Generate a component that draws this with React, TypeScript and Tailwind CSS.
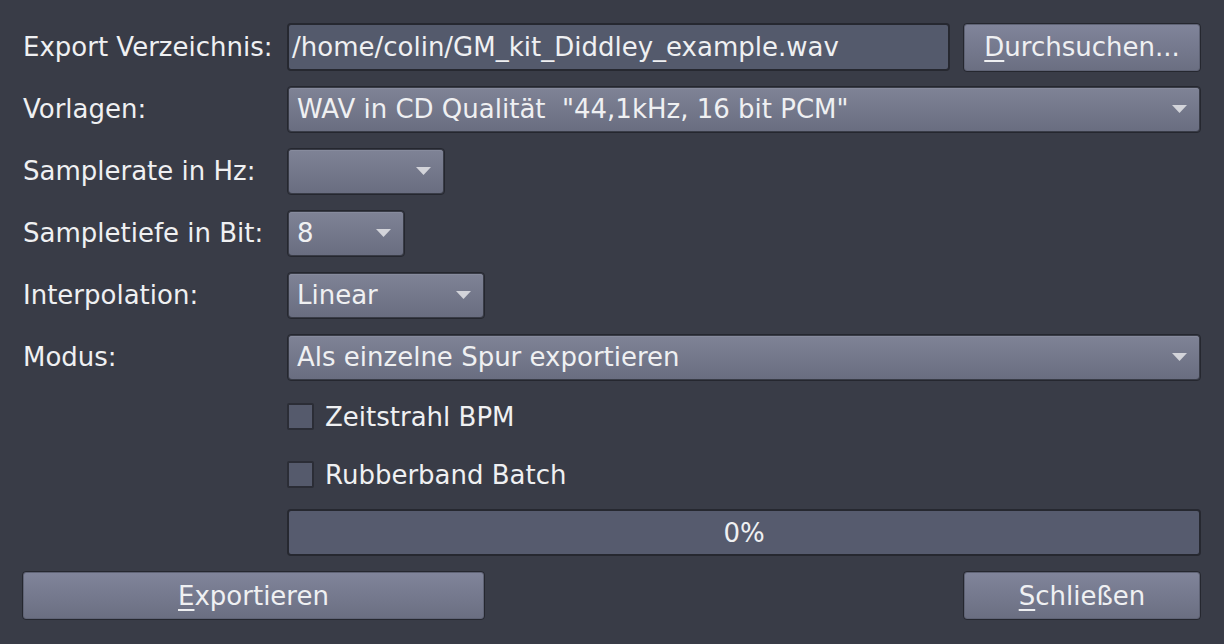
import type { ReactNode } from "react";

const font = { fontFamily: '"DejaVu Sans", "Liberation Sans", sans-serif' };

function Arrow() {
  return (
    <svg width="15" height="8" viewBox="0 0 15 8" className="shrink-0">
      <path d="M0 0 L15 0 L7.5 8 Z" fill="#d3d4da" />
    </svg>
  );
}

function Combo({ value, width }: { value: string; width: string }) {
  return (
    <div className={`${width} h-[47px] rounded-[4px] border border-[#25272f] p-px`}>
      <div className="flex h-full items-center justify-between rounded-[3px] bg-gradient-to-b from-[#7f8396] to-[#696d80] pl-[8px] pr-[12px] shadow-[inset_0_1px_0_#878b9d]">
        <span className="whitespace-pre">{value}</span>
        <Arrow />
      </div>
    </div>
  );
}

function Button({ mnemonic, rest, width }: { mnemonic: string; rest: string; width: string }) {
  return (
    <div className={`${width} h-[49px] rounded-[4px] border border-[#25272f]`}>
      <div className="flex h-full items-center justify-center rounded-[3px] border border-[#5f6375] bg-gradient-to-b from-[#80849a] to-[#6b6f82]">
        <span>
          <span className="underline decoration-[2px] underline-offset-[4px]">{mnemonic}</span>
          {rest}
        </span>
      </div>
    </div>
  );
}

function Row({ label, children }: { label: string; children: ReactNode }) {
  return (
    <div className="flex h-[48px] items-center">
      <div className="w-[265px] shrink-0 pl-px">{label}</div>
      {children}
    </div>
  );
}

function Check({ label }: { label: string }) {
  return (
    <div className="flex h-[27px] items-center pl-[265px]">
      <div className="h-[27px] w-[27px] rounded-[2px] border-2 border-[#2b2d36] bg-[#555a6c]" />
      <span className="ml-[11px]">{label}</span>
    </div>
  );
}

export default function App() {
  return (
    <div
      className="flex h-[644px] w-[1224px] flex-col bg-[#393c47] pb-[24px] pl-[22px] pr-[23px] pt-[23px] text-[26px] leading-none text-[#eff0f2]"
      style={font}
    >
      <div className="flex flex-col gap-[14px]">
        <Row label="Export Verzeichnis:">
          <div className="flex flex-1 items-center gap-[13px]">
            <div className="flex h-[48px] flex-1 items-center rounded-[4px] border-2 border-[#262830] bg-[#545a6c] pl-[3px]">
              /home/colin/GM_kit_Diddley_example.wav
            </div>
            <Button mnemonic="D" rest="urchsuchen..." width="w-[238px]" />
          </div>
        </Row>
        <Row label="Vorlagen:">
          <Combo value={'WAV in CD Qualität  "44,1kHz, 16 bit PCM"'} width="flex-1" />
        </Row>
        <Row label="Samplerate in Hz:">
          <Combo value="" width="w-[158px]" />
        </Row>
        <Row label="Sampletiefe in Bit:">
          <Combo value="8" width="w-[118px]" />
        </Row>
        <Row label="Interpolation:">
          <Combo value="Linear" width="w-[198px]" />
        </Row>
        <Row label="Modus:">
          <Combo value="Als einzelne Spur exportieren" width="flex-1" />
        </Row>
      </div>

      <div className="mt-[22px]">
        <Check label="Zeitstrahl BPM" />
      </div>
      <div className="mt-[31px]">
        <Check label="Rubberband Batch" />
      </div>

      <div className="mt-[21px] pl-[265px]">
        <div className="flex h-[47px] items-center justify-center rounded-[4px] border-2 border-[#262830] bg-[#565b6e]">
          0%
        </div>
      </div>

      <div className="mt-[15px] flex justify-between">
        <Button mnemonic="E" rest="xportieren" width="w-[463px]" />
        <Button mnemonic="S" rest="chließen" width="w-[238px]" />
      </div>
    </div>
  );
}
